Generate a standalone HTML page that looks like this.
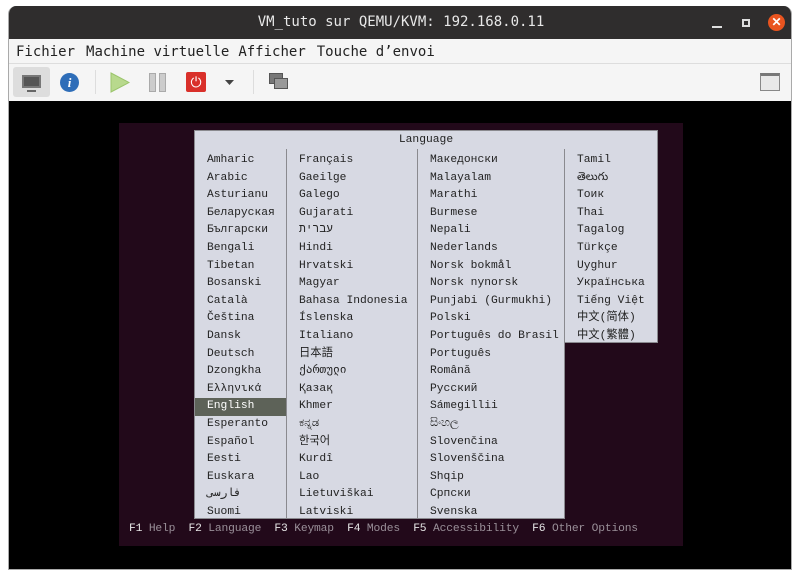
<!DOCTYPE html>
<html><head><meta charset="utf-8"><style>
*{margin:0;padding:0;box-sizing:border-box}
body{width:800px;height:577px;background:#fff;position:relative;overflow:hidden;font-family:"Liberation Sans","DejaVu Sans",sans-serif}
.win{position:absolute;left:8px;top:6px;width:784px;height:564px;border:1px solid #aaa;border-top:none;border-radius:8px 8px 0 0;overflow:hidden;background:#f5f5f5}
.title{position:absolute;left:0;top:0;width:784px;height:33px;background:#2f2d2d;color:#e8e8e8;font-family:"DejaVu Sans Mono","Liberation Mono",monospace;font-size:14px;text-align:center;line-height:33px}
.menu{position:absolute;top:33px;left:0;width:784px;height:25px;border-bottom:1px solid #ddd;font-family:"DejaVu Sans Mono","Liberation Mono",monospace;font-size:14px;color:#222;line-height:27px;padding-left:7px}
.menu span{margin-right:8px}
.tb{position:absolute;top:58px;left:0;width:784px;height:37px}
.scr{position:absolute;top:95px;left:0;width:784px;height:469px;background:#000}
.p{position:absolute;left:110px;top:22px;width:564px;height:423px;background:#22091a}
.m{font-family:"Liberation Mono","DejaVu Sans Mono","Noto Sans CJK SC",monospace;font-size:11.3px}
.hdr{position:absolute;left:75px;top:7px;width:464px;height:20px;background:#d7d9e3;border:1px solid #8a8a8f;color:#222;text-align:center;line-height:19px}
.col{position:absolute;top:26px;background:#d7d9e3;border:1px solid #8a8a8f;border-top:none;color:#222;padding-top:3px}
.col div{height:17.6px;line-height:17.6px;white-space:nowrap}
.sel{background:#5d6258;color:#fff}
.foot{position:absolute;left:10px;top:400px;color:#9a9099;white-space:pre;letter-spacing:-0.17px}
.foot b{color:#e6e6e6;font-weight:normal}
</style></head><body>
<div class="win">
<div class="title">VM_tuto sur QEMU/KVM: 192.168.0.11
<span style="position:absolute;left:703px;top:20px;width:10px;height:2px;background:#ddd"></span>
<span style="position:absolute;left:733px;top:13px;width:8px;height:8px;border:2px solid #ddd"></span>
<span style="position:absolute;left:759px;top:8px;width:17px;height:17px;border-radius:50%;background:#e9541f;color:#fff;font-size:12px;line-height:17px;font-weight:bold;font-family:'Liberation Sans',sans-serif">✕</span>
</div>
<div class="menu"><span style="margin-right:11px">Fichier</span><span style="margin-right:9px">Machine virtuelle</span><span style="margin-right:11px">Afficher</span><span>Touche d’envoi</span></div>
<div class="tb">
<div style="position:absolute;left:4px;top:3px;width:37px;height:30px;background:#ddd;border-radius:3px"></div>
<div style="position:absolute;left:13px;top:11px;width:19px;height:13px;background:#555;border:2px solid #777"></div>
<div style="position:absolute;left:18px;top:26px;width:9px;height:2px;background:#666"></div>
<div style="position:absolute;left:51px;top:9px;width:19px;height:19px;border-radius:50%;background:#2e6db8;color:#fff;font:italic bold 13px 'Liberation Serif',serif;text-align:center;line-height:19px">i</div>
<div style="position:absolute;left:86px;top:6px;width:1px;height:24px;background:#ddd"></div>
<svg style="position:absolute;left:101px;top:8px" width="20" height="21"><path d="M1 1 L19 10.5 L1 20Z" fill="#b8d98d" stroke="#9bc56c"/></svg>
<div style="position:absolute;left:140px;top:9px;width:7px;height:19px;background:#ccc;border:1px solid #aaa"></div>
<div style="position:absolute;left:150px;top:9px;width:7px;height:19px;background:#ccc;border:1px solid #aaa"></div>
<div style="position:absolute;left:177px;top:8px;width:20px;height:20px;background:#d9302a;border-radius:2px;color:#fff;text-align:center;font-size:14px;line-height:20px">⏻</div>
<svg style="position:absolute;left:216px;top:16px" width="10" height="6"><path d="M0 0H9L4.5 5Z" fill="#444"/></svg>
<div style="position:absolute;left:244px;top:6px;width:1px;height:24px;background:#ddd"></div>
<div style="position:absolute;left:260px;top:9px;width:14px;height:11px;background:#777;border:1px solid #555"></div>
<div style="position:absolute;left:265px;top:14px;width:14px;height:11px;background:#999;border:1px solid #555"></div>
<div style="position:absolute;left:751px;top:9px;width:20px;height:18px;background:#e8e8e8;border:1px solid #888;border-top:3px solid #777"></div>
</div>
<div class="scr">
<div class="p m">
<div class="hdr">Language</div>
<div class="col" style="left:75px;width:93px;height:370px">
<div style="padding-left:12px">Amharic</div><div style="padding-left:12px">Arabic</div><div style="padding-left:12px">Asturianu</div><div style="padding-left:12px">Беларуская</div><div style="padding-left:12px">Български</div><div style="padding-left:12px">Bengali</div><div style="padding-left:12px">Tibetan</div><div style="padding-left:12px">Bosanski</div><div style="padding-left:12px">Català</div><div style="padding-left:12px">Čeština</div><div style="padding-left:12px">Dansk</div><div style="padding-left:12px">Deutsch</div><div style="padding-left:12px">Dzongkha</div><div style="padding-left:12px">Ελληνικά</div><div class="sel" style="padding-left:12px">English</div><div style="padding-left:12px">Esperanto</div><div style="padding-left:12px">Español</div><div style="padding-left:12px">Eesti</div><div style="padding-left:12px">Euskara</div><div style="padding-left:12px">فارسی</div><div style="padding-left:12px">Suomi</div>
</div>
<div class="col" style="left:167px;width:132px;height:370px;padding-left:12px">
<div>Français</div><div>Gaeilge</div><div>Galego</div><div>Gujarati</div><div>עברית</div><div>Hindi</div><div>Hrvatski</div><div>Magyar</div><div>Bahasa Indonesia</div><div>Íslenska</div><div>Italiano</div><div>日本語</div><div>ქართული</div><div>Қазақ</div><div>Khmer</div><div>ಕನ್ನಡ</div><div>한국어</div><div>Kurdî</div><div>Lao</div><div>Lietuviškai</div><div>Latviski</div>
</div>
<div class="col" style="left:298px;width:148px;height:370px;padding-left:12px">
<div>Македонски</div><div>Malayalam</div><div>Marathi</div><div>Burmese</div><div>Nepali</div><div>Nederlands</div><div>Norsk bokmål</div><div>Norsk nynorsk</div><div>Punjabi (Gurmukhi)</div><div>Polski</div><div>Português do Brasil</div><div>Português</div><div>Română</div><div>Русский</div><div>Sámegillii</div><div>සිංහල</div><div>Slovenčina</div><div>Slovenščina</div><div>Shqip</div><div>Српски</div><div>Svenska</div>
</div>
<div class="col" style="left:445px;width:94px;height:194px;padding-left:12px">
<div>Tamil</div><div>తెలుగు</div><div>Тоик</div><div>Thai</div><div>Tagalog</div><div>Türkçe</div><div>Uyghur</div><div>Українська</div><div>Tiếng Việt</div><div>中文(简体)</div><div>中文(繁體)</div>
</div>
<div class="foot"><b>F1</b> Help  <b>F2</b> Language  <b>F3</b> Keymap  <b>F4</b> Modes  <b>F5</b> Accessibility  <b>F6</b> Other Options</div>
</div>
</div>
</div>
</body></html>
